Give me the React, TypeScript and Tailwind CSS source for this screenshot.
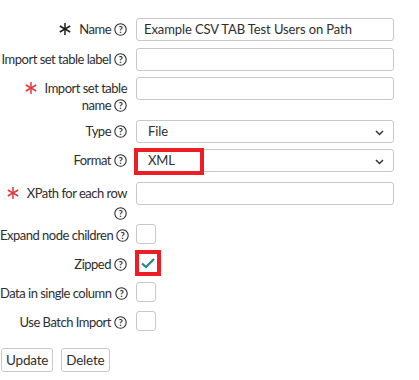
import React from "react";

const Help = () => (
  <svg width="13" height="13" viewBox="0 0 13 13" className="inline-block align-[-2px] ml-[3px]">
    <circle cx="6.5" cy="6.5" r="5.7" fill="none" stroke="#2e2e2e" strokeWidth="1.1" />
    <text x="6.5" y="10" fontSize="9.5" fontWeight="700" textAnchor="middle" fill="#2e2e2e" fontFamily="Lato, sans-serif">
      ?
    </text>
  </svg>
);

const Star = ({ red }: { red?: boolean }) => (
  <svg width="12" height="12" viewBox="0 0 12 12" className="inline-block align-[-1px] mr-[8px]">
    <g stroke={red ? "#e0393e" : "#1f1f1f"} strokeWidth="1.5" strokeLinecap="butt">
      <line x1="6" y1="0" x2="6" y2="12" />
      <line x1="0.8" y1="3" x2="11.2" y2="9" />
      <line x1="0.8" y1="9" x2="11.2" y2="3" />
    </g>
  </svg>
);

const Chevron = () => (
  <svg width="9" height="6" viewBox="0 0 9 6" className="absolute right-[9px] top-[9px]">
    <polyline points="1,1 4.5,4.5 8,1" fill="none" stroke="#333" strokeWidth="1.5" />
  </svg>
);

function Row({ label, children, className = "" }: { label: React.ReactNode; children: React.ReactNode; className?: string }) {
  return (
    <div className={"flex " + className}>
      <div className="w-[127px] shrink-0 text-right pt-[3px] leading-[17px] whitespace-nowrap tracking-[-0.5px]">{label}</div>
      <div className="ml-[9px] flex-1">{children}</div>
    </div>
  );
}

const inputCls = "block w-[258px] h-[23px] border border-[#c8c8c8] rounded-[3px] bg-white px-[7px] text-[13px] leading-[21px] tracking-[-0.1px]";

const Box = () => <div className="w-[20px] h-[20px] border border-[#c8c8c8] rounded-[3px] bg-white" />;

export default function App() {
  return (
    <div className="w-[419px] h-[380px] bg-white text-[#2e2e2e] text-[13px] overflow-hidden" style={{ fontFamily: "Lato, 'Open Sans', sans-serif" }}>
      <div className="pt-[18px]">
        <Row label={<><Star />Name<Help /></>} className="mb-[7px]">
          <div className={inputCls}>Example CSV TAB Test Users on Path</div>
        </Row>
        <Row label={<>Import set table label<Help /></>} className="mb-[6px]">
          <div className={inputCls} />
        </Row>
        <Row label={<><Star red />Import set table<br />name<Help /></>} className="mb-[6px]">
          <div className={inputCls} />
        </Row>
        <Row label={<>Type<Help /></>} className="mb-[6px]">
          <div className={inputCls + " relative pl-[11px]"}>
            File
            <Chevron />
          </div>
        </Row>
        <Row label={<>Format<Help /></>} className="mb-[10px]">
          <div className={inputCls + " relative pl-[11px]"}>
            XML
            <Chevron />
            <div className="absolute left-[-3px] top-[-2px] w-[70px] h-[27px] border-[4px] border-[#ee1c25]" />
          </div>
        </Row>
        <Row label={<><Star red />XPath for each row<br /><span className="inline-block mt-[3px]"><Help /></span></>} className="mb-[2px]">
          <div className={inputCls} />
        </Row>
        <Row label={<>Expand node children<Help /></>} className="mb-[9px]">
          <Box />
        </Row>
        <Row label={<>Zipped<Help /></>} className="mb-[9px]">
          <div className="relative w-[20px] h-[20px]">
            <div className="absolute left-[-1px] top-[-3px] w-[26px] h-[26px] border-[4px] border-[#ee1c25] bg-white flex items-center justify-center">
              <svg width="16" height="12" viewBox="0 0 16 12">
                <polyline points="2,6.5 6,10 14,2" fill="none" stroke="#22898a" strokeWidth="2.2" />
              </svg>
            </div>
          </div>
        </Row>
        <Row label={<>Data in single column<Help /></>} className="mb-[9px]">
          <Box />
        </Row>
        <Row label={<>Use Batch Import<Help /></>}>
          <Box />
        </Row>
        <div className="flex gap-[8px] pl-[1px] mt-[17px]">
          <button className="h-[24px] px-[4px] border border-[#c8c8c8] rounded-[3px] bg-white text-[13.5px] tracking-[-0.2px]">Update</button>
          <button className="h-[24px] px-[4px] border border-[#c8c8c8] rounded-[3px] bg-white text-[13.5px] tracking-[-0.2px]">Delete</button>
        </div>
      </div>
    </div>
  );
}
